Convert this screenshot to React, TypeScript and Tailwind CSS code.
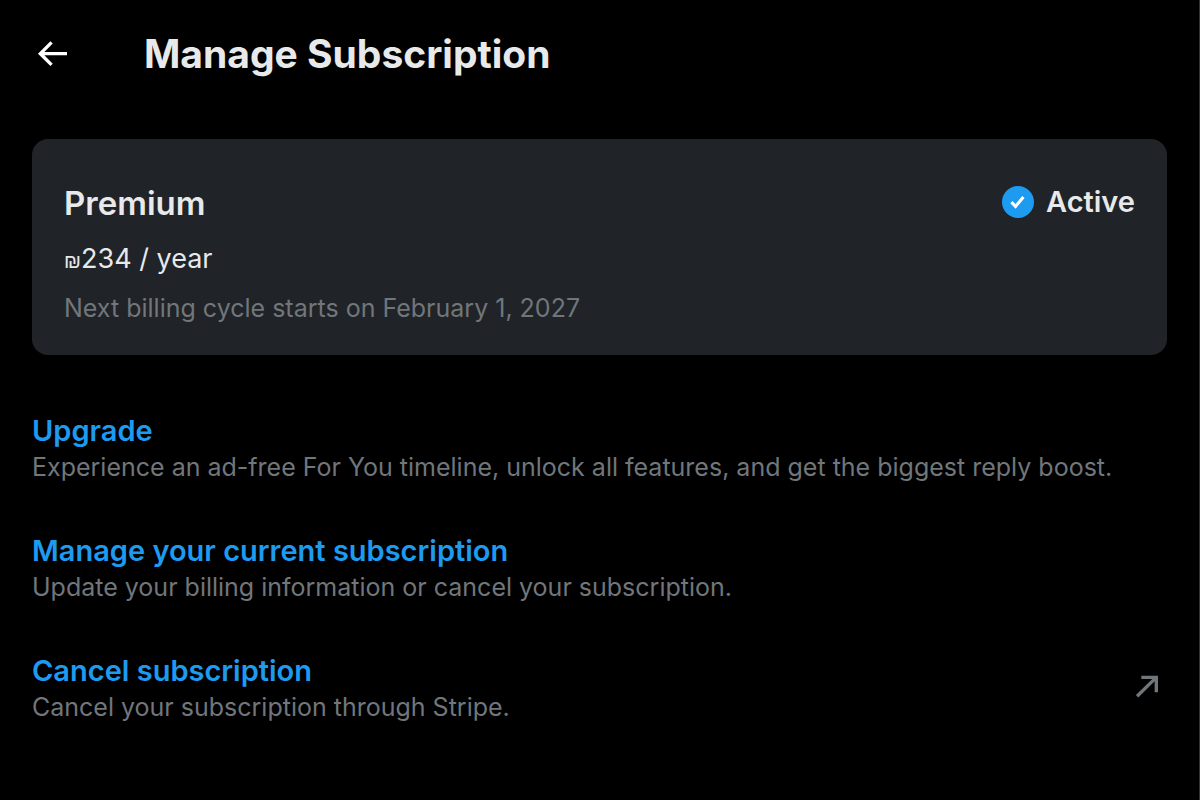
const actions = [
  {
    title: 'Upgrade',
    text: 'Experience an ad-free For You timeline, unlock all features, and get the biggest reply boost.',
    external: false,
  },
  {
    title: 'Manage your current subscription',
    text: 'Update your billing information or cancel your subscription.',
    external: false,
  },
  {
    title: 'Cancel subscription',
    text: 'Cancel your subscription through Stripe.',
    external: true,
  },
]

function BackIcon() {
  return (
    <svg viewBox="0 0 24 24" className="w-10 h-10 fill-white" aria-hidden="true">
      <path d="M7.414 12.8l5.043 5.04-1.414 1.42L3.586 11.8l7.457-7.46 1.414 1.42L7.414 10.8H21v2H7.414z" />
    </svg>
  )
}

function CheckBadge() {
  return (
    <svg viewBox="0 0 32 32" className="w-8 h-8" aria-hidden="true">
      <circle cx="16" cy="16" r="16" fill="#1d9bf0" />
      <path d="M9.4 16.2l4.2 4.2 7.8-9.4" fill="none" stroke="white" strokeWidth="3.1" />
    </svg>
  )
}

function ExternalIcon() {
  return (
    <svg viewBox="0 0 24 24" className="w-10 h-10 fill-[#71767b]" aria-hidden="true">
      <path d="M8.6 5.8h10v10h-2V9.21L6.757 18.86l-1.414-1.42L15.186 7.8H8.6v-2z" />
    </svg>
  )
}

export default function App() {
  return (
    <div className="min-h-screen border-r border-[#2f3336] bg-black px-8 pt-6 font-['Inter',sans-serif] text-[#e7e9ea]">
      <header className="flex items-center gap-18 h-15">
        <button type="button" aria-label="Back">
          <BackIcon />
        </button>
        <h1 className="text-[39px] leading-15 font-bold">Manage Subscription</h1>
      </header>

      <main className="pt-[55px]">
        <section className="flex items-start justify-between rounded-2xl bg-[#202327] px-8 pt-[39px] pb-7">
          <div>
            <h2 className="text-[33px] leading-[50px] font-semibold">Premium</h2>
            <p className="text-[27px] leading-[61px]">
              <span className="font-['Liberation_Sans',sans-serif] text-xl leading-none">₪</span>234 / year
            </p>
            <p className="text-[25px] leading-[38px] text-[#71767b]">Next billing cycle starts on February 1, 2027</p>
          </div>
          <div className="flex items-center gap-3">
            <CheckBadge />
            <span className="text-[29px] leading-12 font-semibold">Active</span>
          </div>
        </section>

        <nav className="flex flex-col gap-12 pt-[55px]">
          {actions.map((action) => (
            <a key={action.title} href="#" className="flex items-center justify-between">
              <span>
                <span className="block text-[29px] leading-[42px] font-semibold text-[#1d9bf0]">{action.title}</span>
                <span className="block text-[25px] leading-[30px] text-[#71767b]">{action.text}</span>
              </span>
              {action.external && <ExternalIcon />}
            </a>
          ))}
        </nav>
      </main>
    </div>
  )
}
